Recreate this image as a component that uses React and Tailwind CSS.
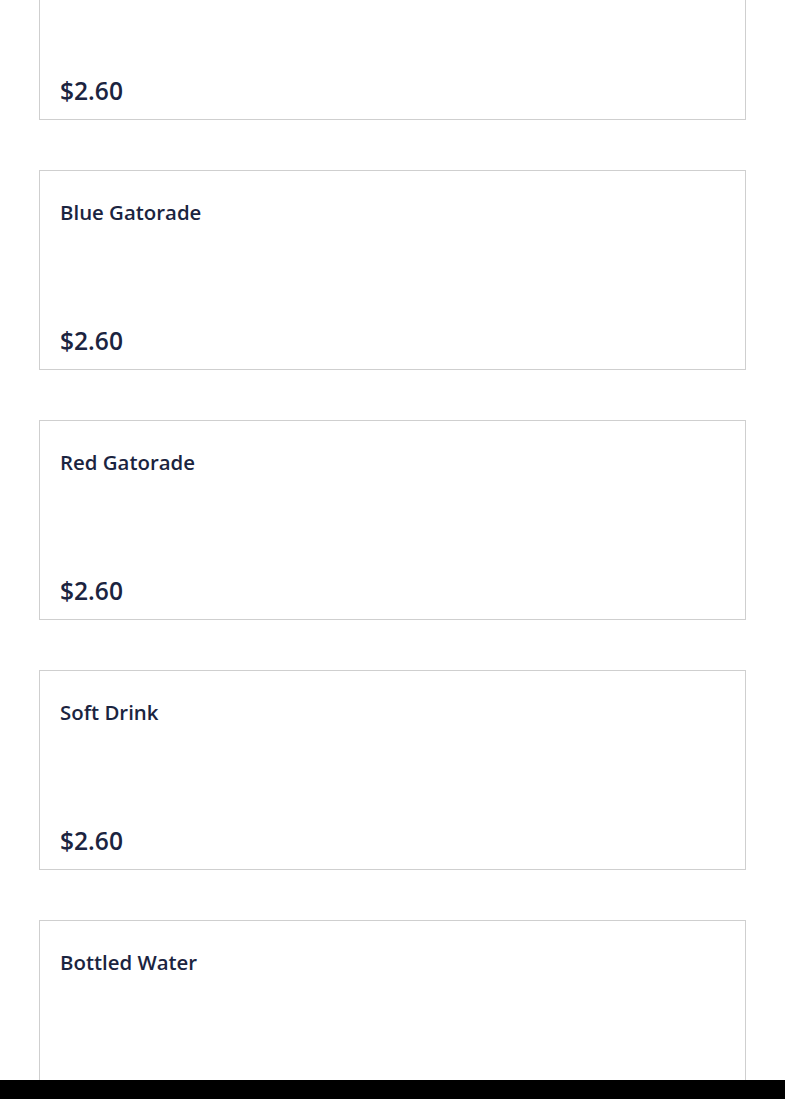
import React from 'react';

const items = [
  { name: '', price: '$2.60' },
  { name: 'Blue Gatorade', price: '$2.60' },
  { name: 'Red Gatorade', price: '$2.60' },
  { name: 'Soft Drink', price: '$2.60' },
  { name: 'Bottled Water', price: '$2.60' },
];

const MenuCard = ({ item }) => (
  <div className="h-[200px] border border-[#cfcfcf] bg-white px-5 pt-[27px] pb-3 flex flex-col">
    <h3 className="text-[20.4px] leading-[28px] font-semibold text-[#1b2440] h-[28px]">{item.name}</h3>
    <div className="mt-auto text-[24.6px] leading-[32px] font-semibold text-[#1b2440]">{item.price}</div>
  </div>
);

export default function App() {
  return (
    <div className="min-h-screen bg-white overflow-hidden" style={{ fontFamily: '"Open Sans", "Noto Sans", sans-serif' }}>
      <div className="px-[39px] -mt-[80px] flex flex-col gap-[50px]">
        {items.map((item, i) => (
          <MenuCard key={i} item={item} />
        ))}
      </div>
      <div className="fixed bottom-0 left-0 right-0 h-[19px] bg-black" />
    </div>
  );
}
